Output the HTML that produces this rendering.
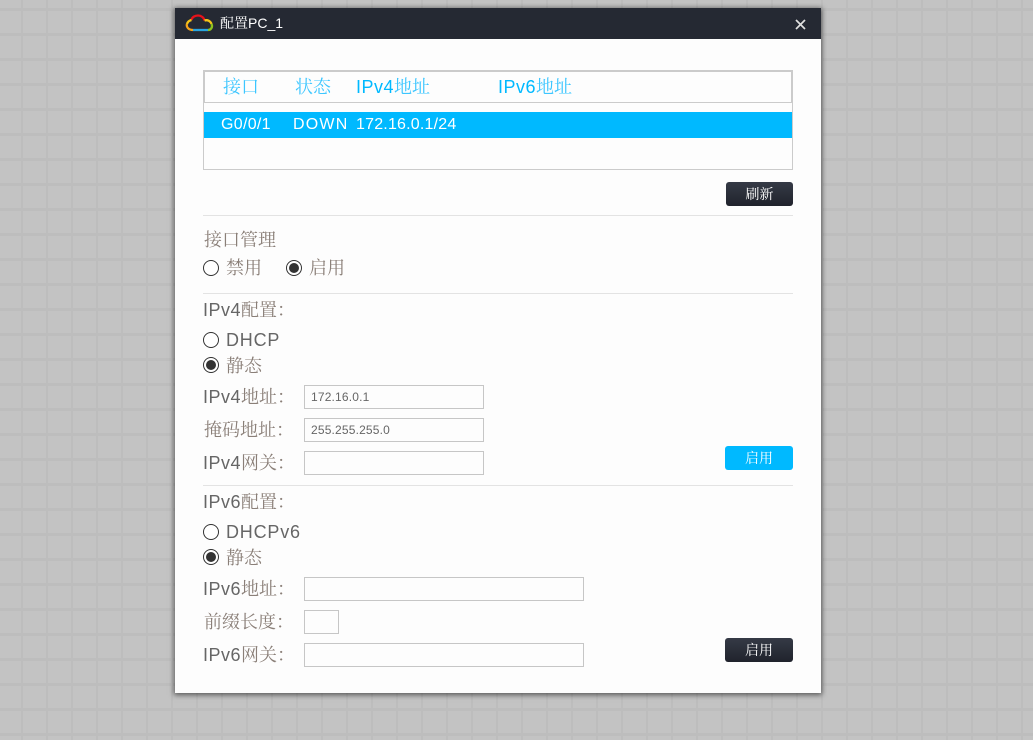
<!DOCTYPE html>
<html lang="zh">
<head>
<meta charset="utf-8">
<style>
html,body{margin:0;padding:0;width:1033px;height:740px;overflow:hidden}
body{position:relative;background-color:#c3c3c3;
background-image:linear-gradient(to right,transparent 21px,#bdbdbd 21px,#bdbdbd 23px,transparent 23px),linear-gradient(to bottom,transparent 8px,#bdbdbd 8px,#bdbdbd 11px,transparent 11px);
background-size:25px 25px;font-family:"Liberation Sans","Noto Serif CJK SC",serif}
.a{position:absolute;white-space:nowrap}
#dlg{left:175px;top:8px;width:646px;height:685px;background:#fdfdfd;box-shadow:0 1px 5px 1px rgba(0,0,0,.55)}
#bar{left:175px;top:8px;width:646px;height:31px;background:#252933}
.t{font-size:18px;letter-spacing:.5px;color:#666;line-height:22px;height:22px}
.h{font-size:18px;letter-spacing:.5px;color:#00b9ff;line-height:22px;height:22px}
.t b,.h b{font-weight:400;font-size:18px;letter-spacing:0}
.t b{color:#8a7f78}
.h b{color:#3cc6ff}
.r{font-size:16px;color:#fff;line-height:26px;height:26px;letter-spacing:.2px}
.hr{left:203px;width:590px;height:1px;background:#e3e3e3}
.inp{left:304px;width:178px;height:22px;border:1px solid #c6c6c6;background:#fdfdfd;font-size:12px;line-height:22px;color:#666;text-indent:6px;letter-spacing:.17px}
.btn{height:24px;border-radius:3px;color:#fff;font-size:14px;line-height:24px;text-align:center}
.dark{background:linear-gradient(#353a46,#20232c)}
.blue{background:#00b9ff}
.rd{width:14px;height:14px;border:1px solid #333;border-radius:50%;background:#fff}
.rd.on::after{content:"";position:absolute;left:2px;top:2px;width:10px;height:10px;border-radius:50%;background:#333}
</style>
</head>
<body>
<div class="a" id="dlg"></div>
<div class="a" id="bar"></div>
<svg class="a" style="left:185px;top:14px" width="30" height="18" viewBox="0 0 30 18" fill="none" stroke-width="2.3" stroke-linecap="butt">
<path d="M6.5 6C7 3 10 1.5 13 1.5C16 1.5 19 3.5 19.5 6.5" stroke="#e8121a"/>
<path d="M19.5 6.5C22.5 5.5 25.5 7 26.5 10" stroke="#f5c518"/>
<path d="M26.5 10C28 13 26 16 23 16" stroke="#8cc21f"/>
<path d="M23 16H8" stroke="#29a6e0"/>
<path d="M8 16C3.5 16 1 13 2 10" stroke="#f5a31a"/>
<path d="M2 10C2.5 8 4.5 6.5 6.5 6" stroke="#f5c518"/>
</svg>
<div class="a" style="left:220px;top:14px;font-size:14px;line-height:18px;color:#fff">配置PC_1</div>
<svg class="a" style="left:794px;top:18px" width="13" height="13" viewBox="0 0 13 13"><path d="M2 2L11 11M11 2L2 11" stroke="#e0e0e0" stroke-width="1.7"/></svg>

<div class="a" style="left:203px;top:70px;width:588px;height:98px;border:1px solid #cbcbcb"></div>
<div class="a" style="left:204px;top:71px;width:586px;height:30px;border:1px solid #cbcbcb"></div>
<div class="a" style="left:204px;top:112px;width:588px;height:26px;background:#00b9ff"></div>
<div class="a h" style="left:223px;top:76px"><b>接口</b></div>
<div class="a h" style="left:295px;top:76px"><b>状态</b></div>
<div class="a h" style="left:356px;top:76px">IPv4<b>地址</b></div>
<div class="a h" style="left:498px;top:76px">IPv6<b>地址</b></div>
<div class="a r" style="left:221px;top:112px;letter-spacing:.3px">G0/0/1</div>
<div class="a r" style="left:293px;top:112px;letter-spacing:1.2px">DOWN</div>
<div class="a r" style="left:356px;top:112px">172.16.0.1/24</div>
<div class="a btn dark" style="left:726px;top:182px;width:67px">刷新</div>
<div class="a hr" style="top:215px"></div>

<div class="a t" style="left:204px;top:229px"><b>接口管理</b></div>
<div class="a rd" style="left:203px;top:260px"></div>
<div class="a t" style="left:226px;top:257px"><b>禁用</b></div>
<div class="a rd on" style="left:286px;top:260px"></div>
<div class="a t" style="left:309px;top:257px"><b>启用</b></div>
<div class="a hr" style="top:293px"></div>

<div class="a t" style="left:203px;top:299px">IPv4<b>配置：</b></div>
<div class="a rd" style="left:203px;top:332px"></div>
<div class="a t" style="left:226px;top:329px;letter-spacing:.8px">DHCP</div>
<div class="a rd on" style="left:203px;top:357px"></div>
<div class="a t" style="left:226px;top:355px"><b>静态</b></div>
<div class="a t" style="left:203px;top:386px">IPv4<b>地址：</b></div>
<div class="a inp" style="top:385px">172.16.0.1</div>
<div class="a t" style="left:204px;top:419px"><b>掩码地址：</b></div>
<div class="a inp" style="top:418px">255.255.255.0</div>
<div class="a t" style="left:203px;top:452px">IPv4<b>网关：</b></div>
<div class="a inp" style="top:451px"></div>
<div class="a btn blue" style="left:725px;top:446px;width:68px">启用</div>
<div class="a hr" style="top:485px"></div>

<div class="a t" style="left:203px;top:491px">IPv6<b>配置：</b></div>
<div class="a rd" style="left:203px;top:524px"></div>
<div class="a t" style="left:226px;top:521px;letter-spacing:.8px">DHCPv6</div>
<div class="a rd on" style="left:203px;top:549px"></div>
<div class="a t" style="left:226px;top:547px"><b>静态</b></div>
<div class="a t" style="left:203px;top:578px">IPv6<b>地址：</b></div>
<div class="a inp" style="top:577px;width:278px"></div>
<div class="a t" style="left:204px;top:611px"><b>前缀长度：</b></div>
<div class="a inp" style="top:610px;width:33px"></div>
<div class="a t" style="left:203px;top:644px">IPv6<b>网关：</b></div>
<div class="a inp" style="top:643px;width:278px"></div>
<div class="a btn dark" style="left:725px;top:638px;width:68px">启用</div>
</body>
</html>
